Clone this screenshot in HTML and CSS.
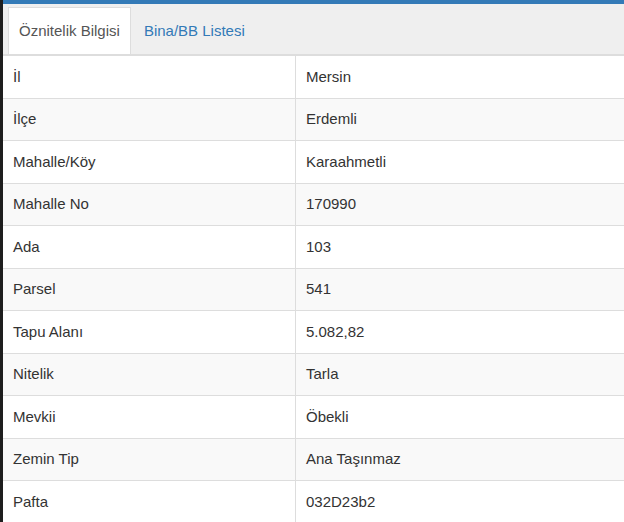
FILE: index.html
```html
<!DOCTYPE html>
<html lang="tr">
<head>
    <meta charset="UTF-8">
    <meta name="viewport" content="width=device-width, initial-scale=1.0">
    <title>Öznitelik Bilgisi</title>
    <link rel="stylesheet" href="styles.css">
</head>
<body>

<div class="panel">
    <div class="topbar"></div>
    <ul class="tabs">
        <li class="active"><a href="#">Öznitelik Bilgisi</a></li>
        <li><a href="#">Bina/BB Listesi</a></li>
    </ul>
    <table class="info">
        <tr><td>İl</td><td>Mersin</td></tr>
        <tr><td>İlçe</td><td>Erdemli</td></tr>
        <tr><td>Mahalle/Köy</td><td>Karaahmetli</td></tr>
        <tr><td>Mahalle No</td><td>170990</td></tr>
        <tr><td>Ada</td><td>103</td></tr>
        <tr><td>Parsel</td><td>541</td></tr>
        <tr><td>Tapu Alanı</td><td>5.082,82</td></tr>
        <tr><td>Nitelik</td><td>Tarla</td></tr>
        <tr><td>Mevkii</td><td>Öbekli</td></tr>
        <tr><td>Zemin Tip</td><td>Ana Taşınmaz</td></tr>
        <tr><td>Pafta</td><td>032D23b2</td></tr>
    </table>
</div>

</body>
</html>
```

FILE: styles.css
```css
body {
    margin: 0;
    background-color: #1e1e1e;
    font-family: "Liberation Sans", Arial, sans-serif;
    font-size: 15px;
    color: #333333;
    overflow: hidden;
}

.panel {
    margin-left: 3px;
    background-color: #FFFFFF;
    min-height: 100vh;
}

.topbar {
    height: 4px;
    background-color: #337ab7;
}

.tabs {
    list-style: none;
    margin: 0;
    padding: 3px 0 0 5px;
    display: flex;
    gap: 2px;
    background-color: #efefef;
    border-bottom: 2px solid #dddddd;
}

.tabs li a {
    display: block;
    padding: 13px 10px;
    line-height: 20px;
    border: 1px solid transparent;
    border-bottom: none;
    color: #337ab7;
    text-decoration: none;
}

.tabs li.active a {
    background-color: #FFFFFF;
    border-color: #dddddd;
    color: #555555;
}

.info {
    width: 100%;
    border-collapse: collapse;
}

.info td {
    padding: 10.75px 10px;
    line-height: 20px;
    border-bottom: 1px solid #dddddd;
}

.info td:first-child {
    width: 272px;
    border-right: 1px solid #dddddd;
}

.info tr:nth-child(even) {
    background-color: #f9f9f9;
}
```
